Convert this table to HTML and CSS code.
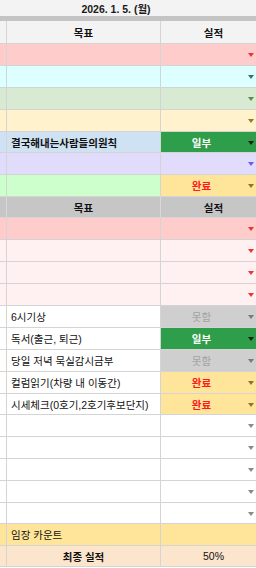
FILE: index.html
```html
<!DOCTYPE html>
<html lang="ko">
<head>
<meta charset="utf-8">
<title>2026. 1. 5.</title>
<link rel="stylesheet" href="styles.css">
</head>
<body>
<div class="sheet">
  <div class="title">2026. 1. 5. (월)</div>
  <div class="band"></div>

  <div class="row head tall"><div class="c0"></div><div class="c1 center">목표</div><div class="c2"><span class="st">실적</span></div></div>
  <div class="row bg-pink"><div class="c0"></div><div class="c1"></div><div class="c2 a-red"><span class="st"></span><i class="dd"></i></div></div>
  <div class="row bg-cyan"><div class="c0"></div><div class="c1"></div><div class="c2 a-teal"><span class="st"></span><i class="dd"></i></div></div>
  <div class="row bg-green"><div class="c0"></div><div class="c1"></div><div class="c2 a-green"><span class="st"></span><i class="dd"></i></div></div>
  <div class="row bg-yellow"><div class="c0"></div><div class="c1"></div><div class="c2 a-olive"><span class="st"></span><i class="dd"></i></div></div>
  <div class="row bg-blue short"><div class="c0"></div><div class="c1 bold">결국해내는사람들의원칙</div><div class="c2 s-part"><span class="st">일부</span><i class="dd"></i></div></div>
  <div class="row bg-purple"><div class="c0"></div><div class="c1"></div><div class="c2 a-violet"><span class="st"></span><i class="dd"></i></div></div>
  <div class="row bg-lime"><div class="c0"></div><div class="c1"></div><div class="c2 s-done"><span class="st">완료</span><i class="dd"></i></div></div>

  <div class="row head2 short"><div class="c0"></div><div class="c1 center">목표</div><div class="c2"><span class="st">실적</span></div></div>
  <div class="row bg-pink"><div class="c0"></div><div class="c1"></div><div class="c2 a-red"><span class="st"></span><i class="dd"></i></div></div>
  <div class="row bg-lpink"><div class="c0"></div><div class="c1"></div><div class="c2 a-red"><span class="st"></span><i class="dd"></i></div></div>
  <div class="row bg-lpink"><div class="c0"></div><div class="c1"></div><div class="c2 a-red"><span class="st"></span><i class="dd"></i></div></div>
  <div class="row bg-lpink"><div class="c0"></div><div class="c1"></div><div class="c2 a-red"><span class="st"></span><i class="dd"></i></div></div>

  <div class="row"><div class="c0"></div><div class="c1">6시기상</div><div class="c2 s-miss"><span class="st">못함</span><i class="dd"></i></div></div>
  <div class="row"><div class="c0"></div><div class="c1">독서(출근, 퇴근)</div><div class="c2 s-part"><span class="st">일부</span><i class="dd"></i></div></div>
  <div class="row"><div class="c0"></div><div class="c1">당일 저녁 묵실감시금부</div><div class="c2 s-miss"><span class="st">못함</span><i class="dd"></i></div></div>
  <div class="row"><div class="c0"></div><div class="c1">컬럼읽기(차량 내 이동간)</div><div class="c2 s-done"><span class="st">완료</span><i class="dd"></i></div></div>
  <div class="row short"><div class="c0"></div><div class="c1">시세체크(0호기,2호기후보단지)</div><div class="c2 s-done"><span class="st">완료</span><i class="dd"></i></div></div>

  <div class="row"><div class="c0"></div><div class="c1"></div><div class="c2 a-grey"><span class="st"></span><i class="dd"></i></div></div>
  <div class="row"><div class="c0"></div><div class="c1"></div><div class="c2 a-grey"><span class="st"></span><i class="dd"></i></div></div>
  <div class="row"><div class="c0"></div><div class="c1"></div><div class="c2 a-grey"><span class="st"></span><i class="dd"></i></div></div>
  <div class="row"><div class="c0"></div><div class="c1"></div><div class="c2 a-grey"><span class="st"></span><i class="dd"></i></div></div>
  <div class="row short"><div class="c0"></div><div class="c1"></div><div class="c2 a-grey"><span class="st"></span><i class="dd"></i></div></div>

  <div class="row bg-gold"><div class="c0"></div><div class="c1">임장 카운트</div><div class="c2"></div></div>
  <div class="row bg-peach short"><div class="c0"></div><div class="c1 center bold">최종 실적</div><div class="c2 plain"><span class="st">50%</span></div></div>
</div>
</body>
</html>
```

FILE: styles.css
```css
* { box-sizing: border-box; }

body {
  margin: 0;
  background: #ffffff;
  font-family: "Liberation Sans", "Noto Sans CJK KR", sans-serif;
  font-size: 10.5px;
  color: #111111;
}

.sheet {
  width: 256px;
  display: flex;
  flex-direction: column;
}

.title {
  height: 16px;
  background: #f3f3f3;
  display: flex;
  align-items: center;
  justify-content: center;
  padding-right: 24px;
  font-weight: bold;
  color: #1a1a1a;
}

.band {
  height: 5px;
  background: #c4c4c4;
}

.row {
  display: grid;
  grid-template-columns: 7px 154px 95px;
  height: 22px;
  border-bottom: 1px solid #d4d4d4;
}

.row.tall { height: 23px; }
.row.short { height: 21px; }

.c0, .c1 {
  border-right: 1px solid #d4d4d4;
}

.c1 {
  display: flex;
  align-items: center;
  padding-left: 4px;
  white-space: nowrap;
  overflow: hidden;
}

.c1.center {
  justify-content: center;
  padding-left: 0;
}

.bold { font-weight: bold; }

.c2 {
  display: flex;
  align-items: center;
}

.st {
  flex: 1;
  text-align: center;
  font-weight: bold;
}

.plain .st {
  font-weight: normal;
  padding-left: 10px;
}

.dd {
  width: 0;
  height: 0;
  border-left: 3.5px solid transparent;
  border-right: 3.5px solid transparent;
  border-top: 4px solid currentColor;
  margin: 1px 2px 0 6px;
}

/* header rows */
.head { background: #f3f3f3; font-weight: bold; }
.head .st { padding-left: 10px; }
.head2 { background: #c6c6c6; font-weight: bold; }
.head2 .st { padding-left: 10px; }
.head2 .c0, .head2 .c1 { border-right-color: #d8d8d8; }

/* row backgrounds */
.bg-pink { background: #ffcccc; }
.bg-cyan { background: #ddffff; }
.bg-green { background: #d9ead3; }
.bg-yellow { background: #fff2cc; }
.bg-blue { background: #cfe2f3; }
.bg-purple { background: #e1dcfc; }
.bg-lime { background: #ccffcc; }
.bg-lpink { background: #fff1f1; }
.bg-gold { background: #ffe599; }
.bg-peach { background: #fce5cd; }

/* arrow colours */
.a-red { color: #ee3333; }
.a-teal { color: #2e7a6a; }
.a-green { color: #5b8b4b; }
.a-olive { color: #9a7a22; }
.a-violet { color: #6a5cf0; }
.a-grey { color: #8a8a8a; }

/* status cells */
.s-part { background: #2f9e4a; color: #0f2414; }
.s-part .st { color: #ffffff; }
.s-done { background: #ffe599; color: #8d7530; }
.s-done .st { color: #ff1a1a; }
.s-miss { background: #cfcfcf; color: #7a7a7a; }
.s-miss .st { color: #a3a3a3; font-weight: normal; }
```
